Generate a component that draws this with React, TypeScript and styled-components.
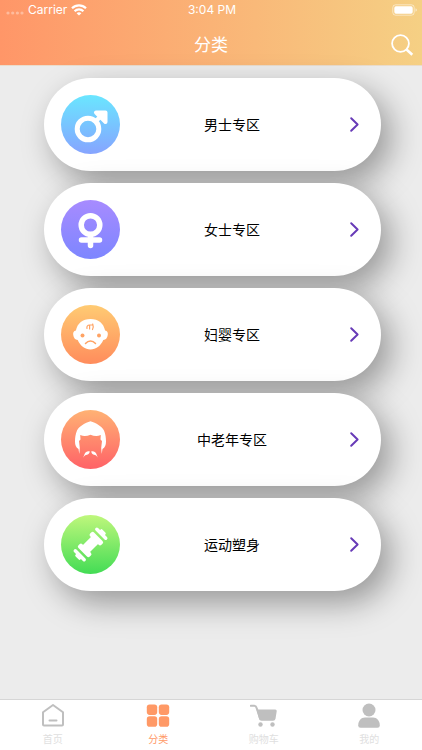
import React from 'react';
import styled, { createGlobalStyle } from 'styled-components';

const GlobalStyle = createGlobalStyle`
  *, *::before, *::after { box-sizing: border-box; }
  body {
    margin: 0;
    background: #ececec;
    font-family: Inter, "Noto Sans CJK SC", sans-serif;
  }
  button { font: inherit; border: 0; padding: 0; background: none; cursor: pointer; }
  svg { display: block; }
`;

const Screen = styled.div`
  display: flex;
  flex-direction: column;
  min-height: 100vh;
`;

const Header = styled.header`
  color: #fff;
  background: linear-gradient(90deg, #ff9668, #f5d084);
  border-bottom: 1px solid #eadccb;
`;

const StatusBar = styled.div`
  display: grid;
  grid-template-columns: 1fr auto 1fr;
  align-items: center;
  height: 20px;
  padding: 0 4px 0 6px;
  font-size: 12px;
  line-height: 20px;
`;

const Carrier = styled.div`
  display: flex;
  align-items: center;
  gap: 4px;
`;

const Battery = styled.div`
  justify-self: end;
`;

const TitleBar = styled.div`
  display: grid;
  grid-template-columns: 1fr auto 1fr;
  align-items: center;
  height: 45px;
  padding: 4px 8px 0;
`;

const Title = styled.h1`
  grid-column: 2;
  margin: 0;
  font-size: 17px;
  line-height: 24px;
  font-weight: 400;
`;

const SearchButton = styled.button`
  justify-self: end;
  color: #fff;
`;

const List = styled.main`
  flex: 1;
  display: flex;
  flex-direction: column;
  gap: 12px;
  padding: 12px 41px 12px 44px;
`;

const Card = styled.button`
  display: flex;
  align-items: center;
  height: 93px;
  padding: 0 17px;
  border-radius: 47px;
  background: #fff;
  color: #000;
  box-shadow: 10px 12px 32px rgba(0, 0, 0, 0.36);
`;

const Disc = styled.span<{ $from: string; $to: string }>`
  flex: none;
  width: 59px;
  height: 59px;
  border-radius: 50%;
  background: linear-gradient(180deg, ${p => p.$from}, ${p => p.$to});
`;

const CardLabel = styled.span`
  flex: 1;
  text-align: center;
  font-size: 14px;
  line-height: 20px;
`;

const TabBar = styled.nav`
  display: grid;
  grid-template-columns: repeat(4, 1fr);
  height: 51px;
  border-top: 1px solid #d6d6d6;
  background: #fff;
`;

const Tab = styled.button<{ $active: boolean }>`
  display: flex;
  flex-direction: column;
  align-items: center;
  gap: 2px;
  padding-top: 2px;
  color: ${p => (p.$active ? '#ff9966' : '#bfbfbf')};
`;

const TabLabel = styled.span<{ $active: boolean }>`
  font-size: 10px;
  line-height: 14px;
  color: ${p => (p.$active ? '#ff9966' : '#e0e0e0')};
`;

const categories = [
  {
    label: '男士专区', from: '#6ae6ff', to: '#86a4ff',
    icon: (
      <g fill="none" stroke="#fff" strokeLinecap="round" strokeLinejoin="round">
        <circle cx="27" cy="34" r="10.8" strokeWidth="5" />
        <path d="M35 26l6-6" strokeWidth="4.5" />
        <path d="M35 17.500h9.500V27z" fill="#fff" strokeWidth="4" />
      </g>
    ),
  },
  {
    label: '女士专区', from: '#a78bff', to: '#7d86ff',
    icon: (
      <g fill="none" stroke="#fff" strokeWidth="5.5" strokeLinecap="round">
        <circle cx="29.5" cy="25" r="9.3" />
        <path d="M29.5 35v10.5M20.5 40h18" />
      </g>
    ),
  },
  {
    label: '妇婴专区', from: '#ffcb73', to: '#ff8c5c',
    icon: (
      <>
        <path d="M29.500 14c8 0 13 4.200 14.600 11.500 2.300.3 3 2.200 2.700 4.200-.4 3-1.800 5-4.500 5.300C39.500 41 35 44.500 29.500 44.500S19.500 41 16.700 35c-2.700-.3-4.100-2.300-4.500-5.300-.3-2 .4-3.900 2.700-4.200C16.500 18.200 21.500 14 29.500 14z" fill="#fff" />
        <circle cx="21.500" cy="30.500" r="2" fill="#ffa364" />
        <circle cx="38" cy="30.500" r="2" fill="#ffa364" />
        <g fill="none" stroke="#ffa364" strokeLinecap="round">
          <path d="M24.500 38.500c3-3.300 7-3.300 10 0" strokeWidth="1.500" />
          <path d="M26 23.500c-.5-2 .5-3.500 2.500-3.500h3.200M28.600 24v-3.500M31.500 24.500c.8-1.500.8-4 .2-5.500" strokeWidth="1.200" />
        </g>
      </>
    ),
  },
  {
    label: '中老年专区', from: '#ffb274', to: '#ff6267',
    icon: (
      <g fill="#fff">
        <path d="M29.500 11.300C35 13 41 16.500 43 20.500C44.500 24 45 28 45 31.500C45 35 44 37.500 41.500 39L40.700 44L40.200 38L41 31L39.500 29.500L39.800 25C36 26.500 33 26 29.500 24.700C26 26 23 26.500 19.200 25L19.500 29.500L18 31L18.800 38L18.300 44L17.500 39C15 37.500 14 35 14 31.500C14 28 14.500 24 16 20.500C18 16.500 24 13 29.500 11.300Z" />
        <path d="M28.700 41.300C26.500 40.800 24.500 41.600 23.700 43.700C23.100 45.400 22.500 46.500 22 47.800C23.300 45.700 24.500 45.200 26 44.800C27.700 44.300 28.700 43.200 28.700 41.300Z" />
        <path d="M30.300 41.300C32.500 40.800 34.500 41.600 35.300 43.700C35.900 45.400 36.500 46.500 37 47.800C35.700 45.700 34.500 45.200 33 44.800C31.300 44.300 30.300 43.200 30.300 41.300Z" />
      </g>
    ),
  },
  {
    label: '运动塑身', from: '#bff77c', to: '#43dc55',
    icon: (
      <g transform="rotate(-45 29.500 29.500)" fill="#fff">
        <rect x="21" y="24.500" width="17" height="10" />
        <rect x="18.500" y="21.500" width="5.500" height="16" rx="2" />
        <rect x="35" y="21.500" width="5.500" height="16" rx="2" />
        <rect x="12.500" y="21.500" width="3.500" height="16" rx="1.700" />
        <rect x="43" y="21.500" width="3.500" height="16" rx="1.700" />
        <rect x="10.500" y="26" width="4" height="7" rx="1.500" />
        <rect x="44.500" y="26" width="4" height="7" rx="1.500" />
      </g>
    ),
  },
];

const tabs = [
  {
    label: '首页', active: false,
    icon: (
      <g fill="none" stroke="currentColor" strokeWidth="2" strokeLinecap="round" strokeLinejoin="round">
        <path d="M3 10.200L13 3l10 7.200V22.500q0 1-1 1H4q-1 0-1-1z" />
        <path d="M9.500 18.500h7" />
      </g>
    ),
  },
  {
    label: '分类', active: true,
    icon: (
      <g fill="currentColor">
        <rect x="1.800" y="2.500" width="10.400" height="10.400" rx="2.800" />
        <rect x="13.800" y="2.500" width="10.400" height="10.400" rx="2.800" />
        <rect x="1.800" y="14.300" width="10.400" height="10.400" rx="2.800" />
        <rect x="13.800" y="14.300" width="10.400" height="10.400" rx="2.800" />
      </g>
    ),
  },
  {
    label: '购物车', active: false,
    icon: (
      <>
        <path d="M.8 3.800h3.400c1.300 0 1.900.5 2.300 1.800L10.300 17" fill="none" stroke="currentColor" strokeWidth="2" strokeLinecap="round" />
        <path d="M6.500 7.500h18.700q1.800 0 1.500 1.800l-1.200 7.500q-.4 2-2.400 2H11.500q-2 0-2.500-2z" fill="currentColor" />
        <circle cx="10.500" cy="22.500" r="2.200" fill="currentColor" />
        <circle cx="22.500" cy="22.500" r="2.200" fill="currentColor" />
      </>
    ),
  },
  {
    label: '我的', active: false,
    icon: (
      <g fill="currentColor">
        <circle cx="13" cy="8" r="6.500" />
        <path d="M9 15.500h8c4 0 6.800 3.500 6.800 8q0 2.300-2.300 2.300H4.500q-2.300 0-2.300-2.300c0-4.500 2.800-8 6.800-8z" />
      </g>
    ),
  },
];

export default function App() {
  return (
    <Screen>
      <GlobalStyle />
      <Header>
        <StatusBar>
          <Carrier>
            <svg width="18" height="10" viewBox="0 0 18 10" fill="#fff" fillOpacity=".35" aria-hidden="true">
              <circle cx="2" cy="8" r="1.600" /><circle cx="6.700" cy="8" r="1.600" />
              <circle cx="11.400" cy="8" r="1.600" /><circle cx="16" cy="8" r="1.600" />
            </svg>
            <span>Carrier</span>
            <svg width="16" height="12" viewBox="0 0 16 12" fill="none" stroke="#fff" strokeWidth="2.200" aria-hidden="true">
              <path d="M1 4.300c4-4 10-4 14 0M3.600 7.200c2.500-2.500 6.300-2.500 8.800 0" />
              <path d="M8 11.600L5.600 9.200c1.400-1.200 3.400-1.200 4.800 0z" fill="#fff" stroke="none" />
            </svg>
          </Carrier>
          <span>3:04 PM</span>
          <Battery>
            <svg width="26" height="12" viewBox="0 0 26 12" aria-hidden="true">
              <rect x=".8" y=".8" width="21.400" height="10.400" rx="2.800" fill="none" stroke="#fff" strokeOpacity=".5" />
              <rect x="2.300" y="2.300" width="18.400" height="7.400" rx="1.600" fill="#fff" />
              <path d="M23.500 4.200q1.500.5 1.500 1.800t-1.500 1.800z" fill="#fff" fillOpacity=".5" />
            </svg>
          </Battery>
        </StatusBar>
        <TitleBar>
          <Title>分类</Title>
          <SearchButton aria-label="搜索">
            <svg width="24" height="24" viewBox="0 0 24 24" fill="none" stroke="currentColor">
              <circle cx="10.500" cy="10.500" r="8.400" strokeWidth="1.800" />
              <path d="M16.500 16.500l5.800 5.300" strokeWidth="2.600" />
            </svg>
          </SearchButton>
        </TitleBar>
      </Header>
      <List>
        {categories.map(c => (
          <Card key={c.label}>
            <Disc $from={c.from} $to={c.to}>
              <svg width="59" height="59" viewBox="0 0 59 59" aria-hidden="true">{c.icon}</svg>
            </Disc>
            <CardLabel>{c.label}</CardLabel>
            <svg width="20" height="20" viewBox="0 0 20 20" fill="none" stroke="#673ab7" strokeWidth="2" strokeLinecap="round" strokeLinejoin="round" aria-hidden="true">
              <path d="M7.200 3.300L13.600 9.500l-6.400 6.200" />
            </svg>
          </Card>
        ))}
      </List>
      <TabBar>
        {tabs.map(t => (
          <Tab key={t.label} $active={t.active} aria-current={t.active ? 'page' : undefined}>
            <svg width="28" height="28" viewBox={t.label === '购物车' ? '0 0 28 28' : '-1 0 28 28'} aria-hidden="true">{t.icon}</svg>
            <TabLabel $active={t.active}>{t.label}</TabLabel>
          </Tab>
        ))}
      </TabBar>
    </Screen>
  );
}
